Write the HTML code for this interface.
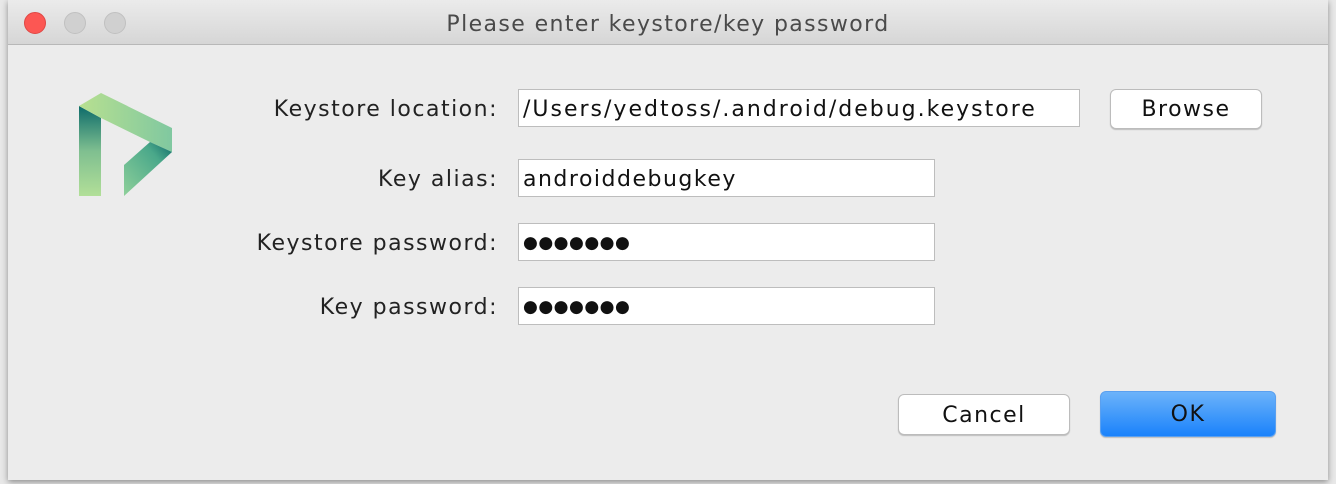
<!DOCTYPE html><html><head><style>
body{margin:0;width:1336px;height:484px;background:#e8e8e8;position:relative;overflow:hidden;font-family:"DejaVu Sans",sans-serif;}
.dlg{position:absolute;left:8px;top:0;width:1320px;height:480px;background:#ececec;box-shadow:0 2px 6px rgba(0,0,0,.4);}
.tb{position:absolute;left:0;top:0;width:1320px;height:44px;background:linear-gradient(#ebebeb,#d6d6d6);border-bottom:1px solid #b8b8b8;}
.tb .t{position:absolute;width:100%;text-align:center;top:12px;font-size:22px;letter-spacing:1.4px;color:#4a4a4a;}
.dot{position:absolute;top:12px;width:22px;height:22px;border-radius:50%;background:#d0d0d0;border:1px solid #c0c0c0;box-sizing:border-box;}
.lab{position:absolute;right:838px;font-size:22px;letter-spacing:1.5px;color:#222;}
.in{position:absolute;left:518px;height:38px;background:#fff;border:1px solid #bdbdbd;box-sizing:border-box;font-size:22px;letter-spacing:2px;padding:7px 4px 0;color:#111;white-space:nowrap;}
.btn{position:absolute;background:#fff;border:1px solid #bcbcbc;border-radius:6px;box-sizing:border-box;text-align:center;font-size:22px;letter-spacing:1.5px;color:#111;box-shadow:0 1px 1px rgba(0,0,0,.2);}
</style></head><body>
<div class="dlg">
<div class="tb"><div class="dot" style="left:16px;background:#fc5753;border-color:#df4744"></div><div class="dot" style="left:56px"></div><div class="dot" style="left:96px"></div><div class="t">Please enter keystore/key password</div></div>
</div>
<svg style="position:absolute;left:0;top:0" width="200" height="220">
<defs><linearGradient id="a" x1="0" y1="0" x2="0" y2="1"><stop offset="0" stop-color="#0d6b6a"/><stop offset=".5" stop-color="#7fbf90"/><stop offset="1" stop-color="#b2df98"/></linearGradient>
<linearGradient id="b" x1="0" y1="0" x2="1" y2="0"><stop offset="0" stop-color="#b8e090"/><stop offset="1" stop-color="#80c8a0"/></linearGradient>
<linearGradient id="c" x1="0" y1="1" x2="1" y2="0"><stop offset="0" stop-color="#8fd09a"/><stop offset=".7" stop-color="#4aa88a"/><stop offset="1" stop-color="#0e6a6a"/></linearGradient></defs>
<polygon points="79,106 101,118 101,196 79,196" fill="url(#a)"/>
<polygon points="79,106 101,93 172,128 172,152 150,142 101,118" fill="url(#b)"/>
<polygon points="124,165 150,142 172,152 124,196" fill="url(#c)"/>
</svg>
<div class="lab" style="top:97px">Keystore location:</div>
<div class="lab" style="top:167px">Key alias:</div>
<div class="lab" style="top:231px">Keystore password:</div>
<div class="lab" style="top:295px">Key password:</div>
<div class="in" style="top:89px;width:562px">/Users/yedtoss/.android/debug.keystore</div>
<div class="in" style="top:159px;width:417px;letter-spacing:1.5px">androiddebugkey</div>
<div class="in" style="top:223px;width:417px;font-size:17px;letter-spacing:0.5px;padding-top:9px">●●●●●●●</div>
<div class="in" style="top:287px;width:417px;font-size:17px;letter-spacing:0.5px;padding-top:9px">●●●●●●●</div>
<div class="btn" style="left:1110px;top:89px;width:152px;height:40px;line-height:40px">Browse</div>
<div class="btn" style="left:898px;top:394px;width:172px;height:41px;line-height:41px">Cancel</div>
<div class="btn" style="left:1100px;top:391px;width:176px;height:46px;line-height:46px;background:linear-gradient(#6cb3fa,#1a82fb);border-color:#5aa0f0;color:#111">OK</div>
</body></html>
